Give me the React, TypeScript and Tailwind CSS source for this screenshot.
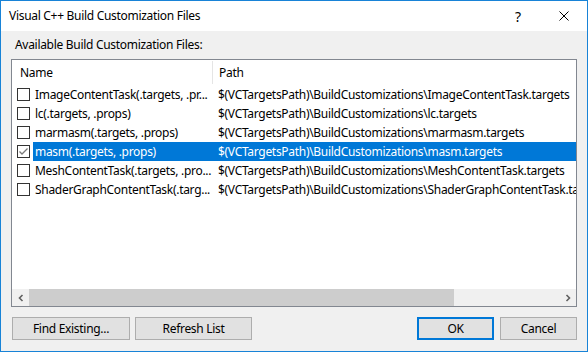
import React from "react";

const rows = [
  { name: "ImageContentTask(.targets, .pr...", path: "$(VCTargetsPath)\\BuildCustomizations\\ImageContentTask.targets", checked: false, sel: false },
  { name: "lc(.targets, .props)", path: "$(VCTargetsPath)\\BuildCustomizations\\lc.targets", checked: false, sel: false },
  { name: "marmasm(.targets, .props)", path: "$(VCTargetsPath)\\BuildCustomizations\\marmasm.targets", checked: false, sel: false },
  { name: "masm(.targets, .props)", path: "$(VCTargetsPath)\\BuildCustomizations\\masm.targets", checked: true, sel: true },
  { name: "MeshContentTask(.targets, .pro...", path: "$(VCTargetsPath)\\BuildCustomizations\\MeshContentTask.targets", checked: false, sel: false },
  { name: "ShaderGraphContentTask(.targ...", path: "$(VCTargetsPath)\\BuildCustomizations\\ShaderGraphContentTask.targets", checked: false, sel: false },
];

function Check({ checked }: { checked: boolean }) {
  return (
    <div className="w-[13px] h-[13px] border border-[#333333] bg-white flex items-center justify-center shrink-0">
      {checked && (
        <svg width="11" height="11" viewBox="0 0 11 11">
          <path d="M1.5 5.5 L4 8 L9.5 2.5" stroke="#7a7a7a" strokeWidth="1.3" fill="none" />
        </svg>
      )}
    </div>
  );
}

function Btn({ label, w, def }: { label: string; w: string; def?: boolean }) {
  return (
    <div
      className={`${w} h-[23px] bg-[#e1e1e1] flex items-center justify-center text-black ${
        def ? "border-2 border-[#0078d7]" : "border border-[#adadad]"
      }`}
    >
      {label}
    </div>
  );
}

export default function App() {
  return (
    <div
      className="w-[588px] h-[352px] border border-[#1883d7] bg-[#f0f0f0] flex flex-col text-[12px] tracking-[-0.3px] text-black overflow-hidden"
      style={{ fontFamily: '"Noto Sans", "Open Sans", sans-serif' }}
    >
      <div className="h-[30px] bg-white flex items-center pl-[8px] shrink-0">
        <div className="flex-1 pb-[1px]">Visual C++ Build Customization Files</div>
        <div className="w-[46px] flex justify-center text-[14px]">?</div>
        <div className="w-[46px] flex justify-center">
          <svg width="10" height="10" viewBox="0 0 10 10">
            <path d="M0.5 0.5 L9.5 9.5 M9.5 0.5 L0.5 9.5" stroke="#000" strokeWidth="1" />
          </svg>
        </div>
      </div>
      <div className="flex-1 flex flex-col px-[10px]">
        <div className="pl-[4px] h-[28px] flex items-center">Available Build Customization Files:</div>
        <div className="h-[248px] border border-[#828790] bg-white flex flex-col">
          <div className="h-[25px] flex items-stretch shrink-0">
            <div className="w-[200px] pl-[8px] flex items-center">Name</div>
            <div className="w-px bg-[#e5e5e5] my-[1px]" />
            <div className="pl-[6px] flex items-center">Path</div>
          </div>
          {rows.map((r, i) => (
            <div key={i} className="h-[19px] flex items-center shrink-0">
              <div className="w-[21px] pl-[5px] shrink-0 flex items-center">
                <Check checked={r.checked} />
              </div>
              <div className={`flex-1 h-full flex items-center whitespace-nowrap overflow-hidden ${r.sel ? "bg-[#0078d7] text-white" : ""}`}>
                <div className="w-[179px] pl-[2px] shrink-0 overflow-hidden">{r.name}</div>
                <div className="pl-[6px]">{r.path}</div>
              </div>
            </div>
          ))}
          <div className="flex-1" />
          <div className="h-[17px] bg-[#f0f0f0] flex items-stretch shrink-0">
            <div className="w-[17px] flex items-center justify-center">
              <svg width="8" height="8" viewBox="0 0 8 8">
                <path d="M5.5 1 L2.5 4 L5.5 7" stroke="#606060" strokeWidth="1.6" fill="none" />
              </svg>
            </div>
            <div className="w-[425px] bg-[#cdcdcd] my-[0px]" />
            <div className="flex-1" />
            <div className="w-[17px] flex items-center justify-center">
              <svg width="8" height="8" viewBox="0 0 8 8">
                <path d="M2.5 1 L5.5 4 L2.5 7" stroke="#606060" strokeWidth="1.6" fill="none" />
              </svg>
            </div>
          </div>
        </div>
        <div className="mt-[10px] flex items-center pl-[1px]">
          <Btn label="Find Existing..." w="w-[118px]" />
          <div className="w-[5px]" />
          <Btn label="Refresh List" w="w-[117px]" />
          <div className="flex-1" />
          <Btn label="OK" w="w-[77px]" def />
          <div className="w-[6px]" />
          <Btn label="Cancel" w="w-[77px]" />
        </div>
      </div>
    </div>
  );
}
